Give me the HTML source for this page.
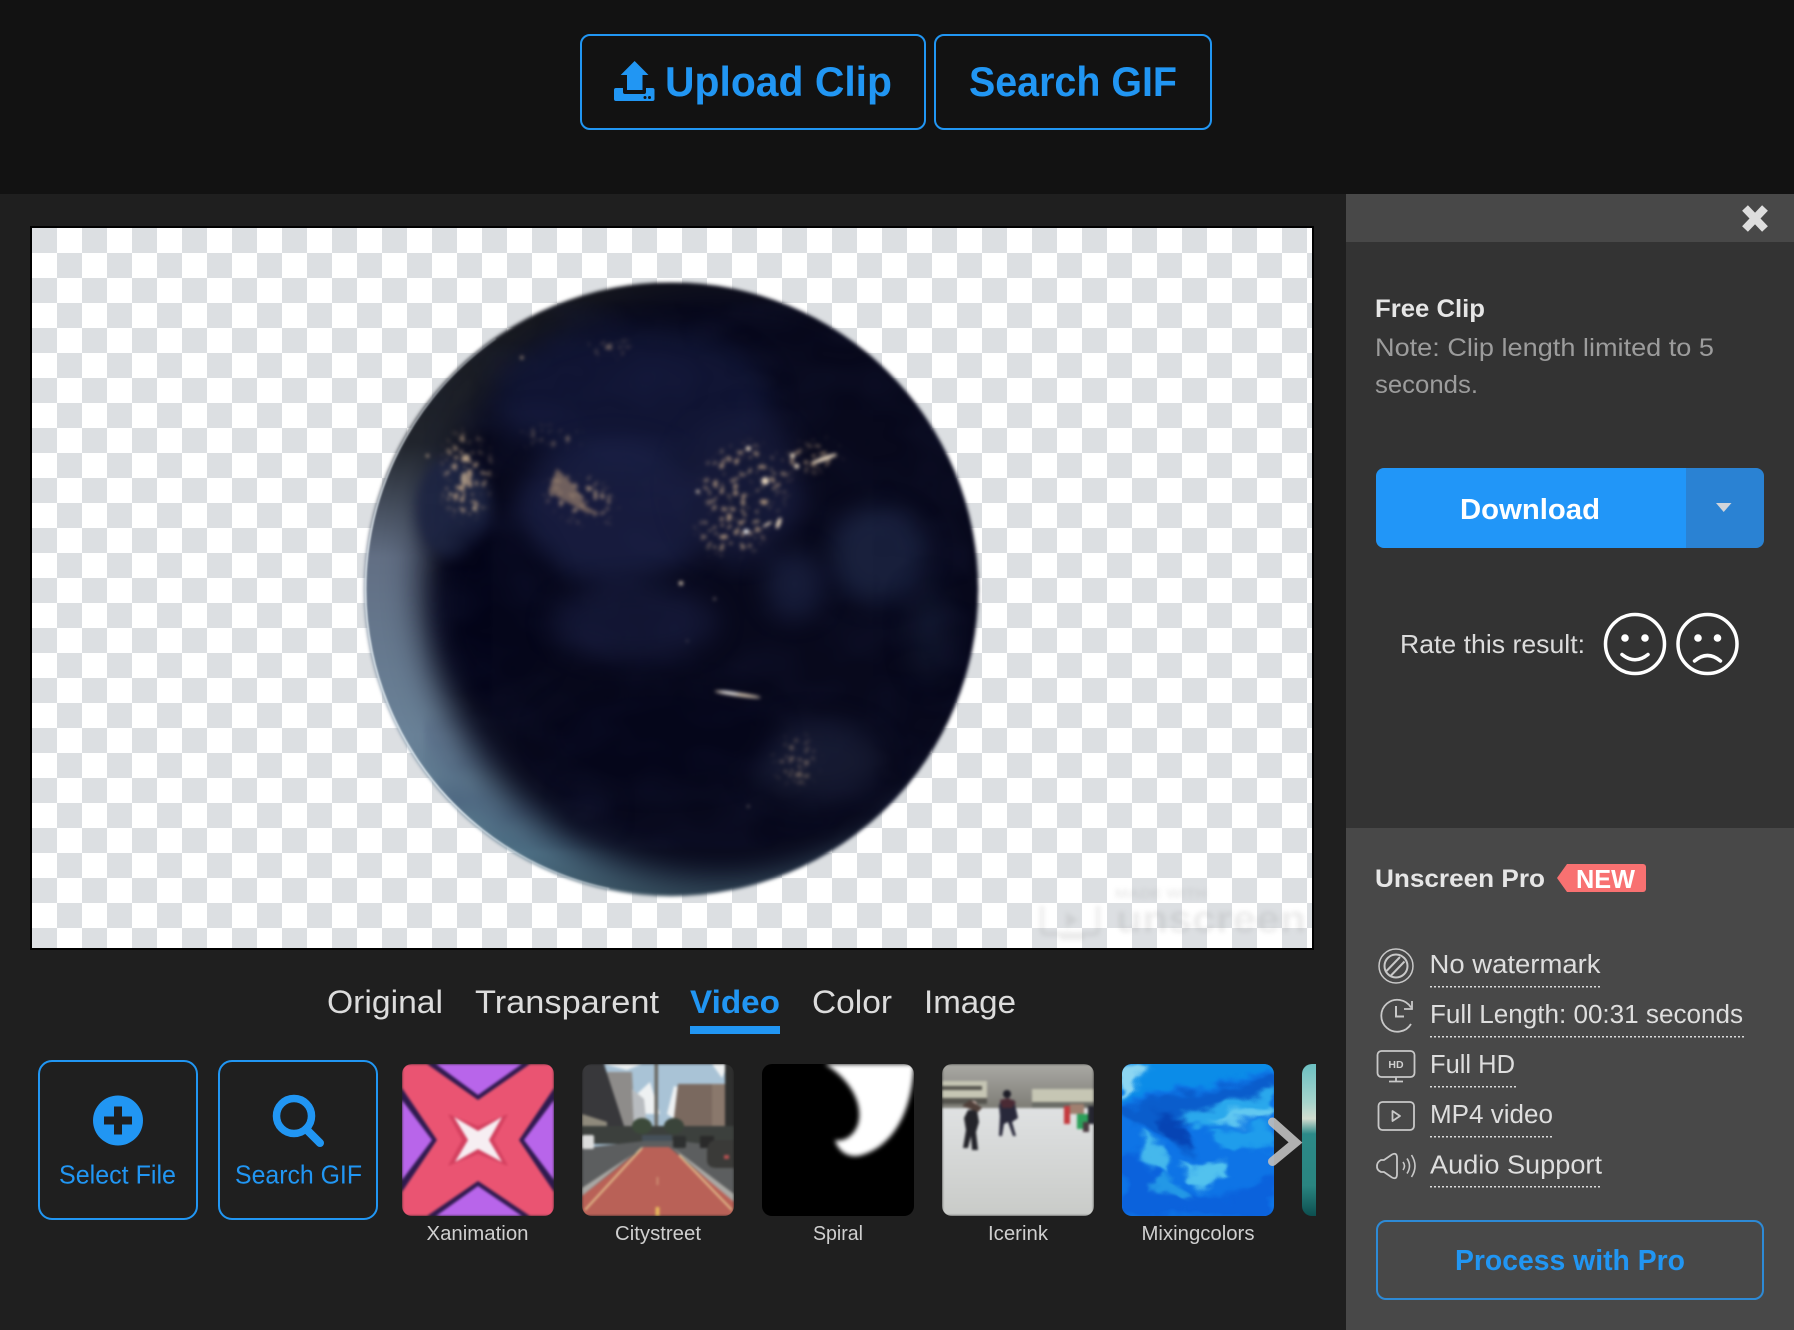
<!DOCTYPE html>
<html><head><meta charset="utf-8"><title>Unscreen</title>
<style>
html,body{margin:0;padding:0;background:#1f1f1f;width:1794px;height:1330px;overflow:hidden}
svg{display:block;font-family:"Liberation Sans",sans-serif}
filter{color-interpolation-filters:sRGB}
</style></head><body>
<svg xmlns="http://www.w3.org/2000/svg" width="1794" height="1330" viewBox="0 0 1794 1330">
<defs>
<pattern id="ck" x="32" y="228" width="50" height="50" patternUnits="userSpaceOnUse">
<rect width="50" height="50" fill="#fff"/><rect width="25" height="25" fill="#dcdfe2"/><rect x="25" y="25" width="25" height="25" fill="#dcdfe2"/>
</pattern>
<clipPath id="globe"><circle cx="787" cy="782" r="729"/></clipPath>
<linearGradient id="rim" x1="0" y1="0" x2="0" y2="1"><stop offset="0" stop-color="#14151b"/><stop offset=".28" stop-color="#22262e"/><stop offset=".45" stop-color="#626f84"/><stop offset=".72" stop-color="#6a8298"/><stop offset=".9" stop-color="#4f7186"/><stop offset="1" stop-color="#2f4450"/></linearGradient>
<linearGradient id="rimline" gradientUnits="userSpaceOnUse" x1="0" y1="187" x2="0" y2="1500"><stop offset="0" stop-color="#dfe8ee" stop-opacity=".25"/><stop offset=".35" stop-color="#dfe8ee" stop-opacity=".9"/><stop offset=".85" stop-color="#dfeaf0" stop-opacity=".95"/><stop offset="1" stop-color="#dfe8ee" stop-opacity=".4"/></linearGradient>
<filter id="b2" color-interpolation-filters="sRGB" x="-10%" y="-10%" width="120%" height="120%"><feGaussianBlur stdDeviation="4.500"/></filter>
<filter id="b40" color-interpolation-filters="sRGB" x="-20%" y="-20%" width="140%" height="140%"><feGaussianBlur stdDeviation="42"/></filter>
<filter id="b30" color-interpolation-filters="sRGB" x="-60%" y="-60%" width="220%" height="220%"><feGaussianBlur stdDeviation="30"/></filter>
<filter id="b15" color-interpolation-filters="sRGB" x="-60%" y="-60%" width="220%" height="220%"><feGaussianBlur stdDeviation="14"/></filter>
<filter id="l3" color-interpolation-filters="sRGB" x="-100%" y="-100%" width="300%" height="300%"><feGaussianBlur stdDeviation="2"/></filter>
<filter id="t1" color-interpolation-filters="sRGB" x="-5%" y="-5%" width="110%" height="110%"><feGaussianBlur stdDeviation="1.300"/></filter>
<filter id="t2" color-interpolation-filters="sRGB" x="-5%" y="-5%" width="110%" height="110%"><feGaussianBlur stdDeviation="2.500"/></filter>
<filter id="swirl" color-interpolation-filters="sRGB" x="-10%" y="-10%" width="120%" height="120%"><feGaussianBlur stdDeviation="2.500" result="g"/><feTurbulence type="fractalNoise" baseFrequency="0.03 0.045" numOctaves="3" seed="11" result="n"/><feDisplacementMap in="g" in2="n" scale="28" xChannelSelector="R" yChannelSelector="G"/></filter>
<filter id="clouds" color-interpolation-filters="sRGB" x="0" y="0" width="100%" height="100%"><feTurbulence type="fractalNoise" baseFrequency="0.006 0.012" numOctaves="3" seed="4"/><feColorMatrix values="0 0 0 0 .14  0 0 0 0 .17  0 0 0 0 .34  1.1 0 0 0 -.42"/><feGaussianBlur stdDeviation="10"/></filter>
<filter id="sparkle" color-interpolation-filters="sRGB" x="-30%" y="-30%" width="160%" height="160%"><feGaussianBlur in="SourceAlpha" stdDeviation="12" result="m"/><feTurbulence type="turbulence" baseFrequency="0.06" numOctaves="2" seed="9"/><feColorMatrix values="0 0 0 0 .80  0 0 0 0 .68  0 0 0 0 .55  8 0 0 0 -2.800"/><feComposite in2="m" operator="in"/><feGaussianBlur stdDeviation="2.400"/></filter>
<clipPath id="c1"><rect x="402" y="1064" width="152" height="152" rx="10"/></clipPath>
<clipPath id="c2"><rect x="582" y="1064" width="152" height="152" rx="10"/></clipPath>
<clipPath id="c3"><rect x="762" y="1064" width="152" height="152" rx="10"/></clipPath>
<clipPath id="c4"><rect x="942" y="1064" width="152" height="152" rx="10"/></clipPath>
<clipPath id="c5"><rect x="1122" y="1064" width="152" height="152" rx="10"/></clipPath>
<clipPath id="c6"><path d="M1316 1064h-4a10 10 0 0 0-10 10v132a10 10 0 0 0 10 10h4z"/></clipPath>
<linearGradient id="tree" x1="0" y1="0" x2="0" y2="1"><stop offset="0" stop-color="#a9a9a4"/><stop offset="1" stop-color="#77766f"/></linearGradient>
<linearGradient id="ice" x1="0" y1="0" x2="0" y2="1"><stop offset="0" stop-color="#dfe1e2"/><stop offset="1" stop-color="#c9cbc8"/></linearGradient>
<linearGradient id="sea" x1="0" y1="0" x2="0" y2="1"><stop offset="0" stop-color="#6cc0c2"/><stop offset=".25" stop-color="#a6d4cc"/><stop offset=".36" stop-color="#d2dccf"/><stop offset=".46" stop-color="#2c8a88"/><stop offset=".8" stop-color="#2a8580"/><stop offset="1" stop-color="#0d4f50"/></linearGradient>
</defs>

<!-- backgrounds -->
<rect width="1794" height="1330" fill="#1f1f1f"/>
<rect width="1794" height="194" fill="#121212"/>
<rect x="1346" y="194" width="448" height="48" fill="#484848"/>
<rect x="1346" y="242" width="448" height="586" fill="#333"/>
<rect x="1346" y="828" width="448" height="502" fill="#484848"/>

<!-- top buttons -->
<rect x="581" y="35" width="344" height="94" rx="9" fill="none" stroke="#2196f3" stroke-width="2"/>
<rect x="935" y="35" width="276" height="94" rx="9" fill="none" stroke="#2196f3" stroke-width="2"/>
<path fill="#2196f3" d="M634.6 61 648.5 75H642.5V90H627V75H620.7ZM614 90q0-2 2-2h7v4q0 2 2 2h19q2 0 2-2v-4h6.500q2 0 2 2v9q0 2-2 2H616q-2 0-2-2Z"/>
<circle cx="645" cy="97.500" r="1.500" fill="#121212"/><circle cx="649.500" cy="97.500" r="1.500" fill="#121212"/>
<text x="665" y="96" font-size="42" font-weight="700" fill="#2196f3" textLength="227" lengthAdjust="spacingAndGlyphs">Upload Clip</text>
<text x="969" y="96" font-size="42" font-weight="700" fill="#2196f3" textLength="208" lengthAdjust="spacingAndGlyphs">Search GIF</text>

<!-- preview -->
<rect x="30" y="226" width="1284" height="724" fill="#000"/>
<rect x="32" y="228" width="1280" height="720" fill="url(#ck)"/>

<!-- earth -->
<svg x="340" y="260" width="660" height="660" viewBox="0 0 1568 1568">
<g filter="url(#b2)"><g clip-path="url(#globe)">
<rect x="0" y="0" width="1568" height="1568" fill="url(#rim)"/>
<circle cx="905" cy="770" r="712" fill="#08091c" filter="url(#b40)"/>
<!-- dim land / cloud masses -->
<ellipse cx="700" cy="330" rx="330" ry="170" fill="#141a3c" opacity=".75" filter="url(#b30)"/>
<ellipse cx="650" cy="600" rx="230" ry="170" fill="#1c2248" opacity=".75" filter="url(#b30)"/>
<ellipse cx="950" cy="540" rx="150" ry="170" fill="#181c3c" opacity=".8" filter="url(#b30)"/>
<ellipse cx="270" cy="590" rx="90" ry="120" fill="#1f2644" opacity=".95" filter="url(#b15)"/>
<ellipse cx="380" cy="830" rx="130" ry="200" fill="#05061a" opacity=".95" filter="url(#b30)"/>
<ellipse cx="1280" cy="700" rx="115" ry="115" fill="#1b2340" opacity=".9" filter="url(#b30)"/>
<ellipse cx="1080" cy="770" rx="70" ry="80" fill="#181e3c" opacity=".9" filter="url(#b30)"/>
<ellipse cx="1400" cy="880" rx="50" ry="120" fill="#11162c" opacity=".9" filter="url(#b30)"/>
<ellipse cx="700" cy="860" rx="200" ry="90" fill="#161a3a" opacity=".75" filter="url(#b30)"/>
<ellipse cx="1130" cy="1190" rx="160" ry="95" fill="#151930" filter="url(#b30)"/>
<ellipse cx="590" cy="1300" rx="50" ry="45" fill="#11142c" filter="url(#b30)"/>
<ellipse cx="760" cy="1130" rx="280" ry="120" fill="#05061a" opacity=".85" filter="url(#b30)"/>
<rect x="200" y="100" width="1300" height="1300" filter="url(#clouds)" opacity=".3"/>
<!-- speckled city lights -->
<g filter="url(#sparkle)" opacity=".85">
<ellipse cx="300" cy="510" rx="55" ry="100"/>
<ellipse cx="570" cy="565" rx="90" ry="50" transform="rotate(25 570 565)"/>
<ellipse cx="960" cy="530" rx="100" ry="90"/>
<ellipse cx="1120" cy="470" rx="70" ry="30" transform="rotate(-15 1120 470)"/>
<ellipse cx="930" cy="640" rx="80" ry="60"/>
<ellipse cx="640" cy="210" rx="50" ry="12"/>
<ellipse cx="500" cy="420" rx="70" ry="14"/>
<ellipse cx="1085" cy="1190" rx="50" ry="55" opacity=".6"/>
</g>
<g filter="url(#l3)">
<g fill="#c8b092" opacity=".8">
<circle cx="300" cy="470" r="9"/><ellipse cx="295" cy="520" rx="8" ry="16"/><circle cx="262" cy="556" r="4"/><circle cx="320" cy="590" r="6"/><circle cx="208" cy="465" r="4"/><circle cx="432" cy="232" r="4"/>
</g>
<path d="M515 495 555 535 585 585 620 605 585 600 530 570 495 550Z" fill="#8e7768" opacity=".75" filter="url(#l3)"/>
<g fill="#e8d6be">
<circle cx="1010" cy="525" r="9"/><circle cx="970" cy="448" r="6"/><circle cx="1075" cy="465" r="6"/><circle cx="1085" cy="490" r="6"/><ellipse cx="1150" cy="472" rx="32" ry="5" transform="rotate(-20 1150 472)"/><ellipse cx="1042" cy="625" rx="5" ry="14" transform="rotate(20 1042 625)"/><ellipse cx="1015" cy="628" rx="12" ry="3" transform="rotate(-30 1015 628)"/><circle cx="850" cy="550" r="4"/>
<ellipse cx="945" cy="1032" rx="55" ry="4" transform="rotate(8 945 1032)"/><circle cx="810" cy="768" r="5"/><circle cx="890" cy="805" r="3" opacity=".6"/><circle cx="825" cy="905" r="2" opacity=".6"/><circle cx="970" cy="1298" r="2.500" opacity=".7"/>
</g>
<circle cx="965" cy="645" r="6" fill="#fff"/><ellipse cx="925" cy="1028" rx="24" ry="3" transform="rotate(8 925 1028)" fill="#fff"/>
</g>
</g></g>
<path d="M370 187A727 727 0 0 0 640 1494" fill="none" stroke="url(#rimline)" stroke-width="4" filter="url(#l3)"/>
</svg>

<!-- watermark -->
<g filter="url(#t2)" opacity=".14" fill="#777">
<text x="1115" y="898" font-size="13" font-weight="700" textLength="92" lengthAdjust="spacingAndGlyphs">MADE WITH</text>
<text x="1116" y="932" font-size="38" font-weight="700" textLength="190" lengthAdjust="spacingAndGlyphs">unscreen</text>
<path d="M1042 906v24q0 4 4 4h48q4 0 4-4v-24" fill="none" stroke="#777" stroke-width="4"/><path d="M1060 938h24" stroke="#777" stroke-width="4"/><path d="M1066 912l12 8-12 8z"/>
</g>

<!-- tabs -->
<g font-size="32" fill="#dcdcdc">
<text x="327" y="1013" textLength="116" lengthAdjust="spacingAndGlyphs">Original</text>
<text x="475" y="1013" textLength="184" lengthAdjust="spacingAndGlyphs">Transparent</text>
<text x="690" y="1013" font-weight="700" fill="#2196f3" textLength="90" lengthAdjust="spacingAndGlyphs">Video</text>
<text x="812" y="1013" textLength="80" lengthAdjust="spacingAndGlyphs">Color</text>
<text x="924" y="1013" textLength="92" lengthAdjust="spacingAndGlyphs">Image</text>
</g>
<rect x="690" y="1026" width="90" height="8" fill="#2196f3"/>

<!-- select buttons -->
<rect x="39" y="1061" width="158" height="158" rx="13" fill="none" stroke="#2196f3" stroke-width="2"/>
<rect x="219" y="1061" width="158" height="158" rx="13" fill="none" stroke="#2196f3" stroke-width="2"/>
<circle cx="118" cy="1120.500" r="25" fill="#2196f3"/>
<path d="M118 1106.500v28M104 1120.500h28" stroke="#1f1f1f" stroke-width="8"/>
<circle cx="294" cy="1116" r="17.500" fill="none" stroke="#2196f3" stroke-width="7.500"/>
<path d="M306 1129 320 1143" stroke="#2196f3" stroke-width="8" stroke-linecap="round"/>
<text x="59" y="1183.500" font-size="26" fill="#2196f3" textLength="117" lengthAdjust="spacingAndGlyphs">Select File</text>
<text x="235" y="1183.500" font-size="26" fill="#2196f3" textLength="127" lengthAdjust="spacingAndGlyphs">Search GIF</text>

<!-- thumb 1 Xanimation -->
<g clip-path="url(#c1)"><g transform="translate(402 1064)" filter="url(#t1)">
<rect width="152" height="152" fill="#ea5472"/>
<path d="M25 0H128L76 36ZM0 24 35 76 0 128ZM152 24 117 76 152 128ZM25 152H128L76 117Z" fill="#2f1a4f"/>
<path d="M34 0H120L76 31ZM0 36 30 76 0 116ZM152 36 122 76 152 116ZM34 152H120L76 122Z" fill="#b865ea"/>
<path d="M46 50 76 62 106 50 92 76 106 102 76 90 46 102 60 76Z" fill="#d4405f"/>
<path d="M52 53 76 67 100 53 87 76 100 98 76 85 53 98 66 76Z" fill="#f6eef2"/>
</g></g>

<!-- thumb 2 Citystreet -->
<g clip-path="url(#c2)"><g transform="translate(582 1064)" filter="url(#t1)">
<rect width="152" height="90" fill="#a9c3d6"/>
<path d="M22 0H60L45 6ZM55 30 68 18 78 50 60 50ZM85 50 92 22 112 28 100 60ZM130 0H146L140 14Z" fill="#eef1f2"/>
<path d="M25 8 50 8 53 65 35 65Z" fill="#8e8c8a"/><path d="M50 25 62 35 65 65 52 65Z" fill="#b8bcc0"/>
<path d="M0 0H22L42 62 0 62Z" fill="#38383b"/><path d="M0 50 25 58 25 70 0 66Z" fill="#8f8a7c"/>
<path d="M96 20H130V70H90Z" fill="#7a695f"/><path d="M130 20H145V70H130Z" fill="#8a786c"/><rect x="143" width="9" height="75" fill="#2e2f2e"/>
<rect x="72.500" width="3.500" height="80" fill="#6a6862"/>
<path d="M0 62H152V80H0Z" fill="#3c403d"/><ellipse cx="60" cy="62" rx="10" ry="8" fill="#3c4a3a"/><ellipse cx="92" cy="62" rx="10" ry="8" fill="#3a443a"/>
<path d="M0 84 72 76H90L152 84V152H0Z" fill="#5c5e5f"/>
<rect x="0" y="71" width="12" height="14" rx="2" fill="#dcdcdc"/><rect x="91" y="72" width="13" height="12" rx="2" fill="#2e3030"/><rect x="118" y="72" width="14" height="12" fill="#2a2a2a"/><path d="M125 88q0-12 10-12h17v28h-17q-10 0-10-8Z" fill="#3a3a38"/><rect x="142" y="91" width="5" height="4" fill="#b05050"/><rect x="60" y="71" width="30" height="6" fill="#455059"/>
<path d="M0 124 62 83 90 83 152 130V140L90 83 60 83 0 132Z" fill="#a9a8a4"/>
<path d="M0 132 62 83H87L152 138V152H0Z" fill="#b96157"/>
<path d="M3 146 60 84M150 146 97 91" stroke="#e4c28e" stroke-width="1.800" fill="none"/>
<rect x="73.500" y="143" width="4" height="9" fill="#e5b65c"/><rect x="74.500" y="113" width="2" height="8" fill="#cc8a70"/>
</g></g>

<!-- thumb 3 Spiral -->
<g clip-path="url(#c3)"><rect x="762" y="1064" width="152" height="152" fill="#000"/>
<path transform="translate(762 1064)" filter="url(#t2)" fill="#fff" d="M63 0C86 14 102 38 96 60C92 72 82 78 73 76C76 88 88 95 100 91C130 82 150 50 152 0Z"/>
</g>

<!-- thumb 4 Icerink -->
<g clip-path="url(#c4)"><g transform="translate(942 1064)" filter="url(#t1)">
<rect width="152" height="50" fill="url(#tree)"/>
<path d="M0 17H45V34H0ZM90 25H152V45H90Z" fill="#c6c6b4"/><path d="M0 22H40V26H0ZM0 34H45V40H0Z" fill="#55544e"/><rect x="90" y="38" width="62" height="6" fill="#6a6c66"/>
<rect y="44" width="152" height="108" fill="url(#ice)"/>
<path d="M26 46h9l2 12-3 10 2 18h-6l-1-14-3 12h-5l3-18-2-12z" fill="#24242a"/><circle cx="31" cy="41" r="4" fill="#e4c8c0"/><path d="M20 42 28 36 40 44 36 48Z" fill="#50403a"/>
<circle cx="65" cy="30" r="4" fill="#1c1c26"/><path d="M59 36h13l4 18-6 4 4 14h-3l-5-14-4 2-2 12h-3l1-20-1-10z" fill="#28283a"/><path d="M58 36 66 34 74 38 70 44 60 44Z" fill="#4a2a34"/>
<rect x="122" y="42" width="6" height="18" fill="#c43b3f"/><rect x="135" y="50" width="11" height="15" fill="#2ca05a"/><rect x="146" y="42" width="6" height="18" fill="#252530"/><rect x="128" y="40" width="14" height="10" fill="#a08070"/><rect x="141" y="58" width="6" height="10" fill="#4a3a40"/>
</g></g>

<!-- thumb 5 Mixingcolors -->
<g clip-path="url(#c5)"><g transform="translate(1122 1064)">
<rect width="152" height="152" fill="#0e74e6"/>
<g filter="url(#swirl)">
<path d="M-10 -10H160V10L100 16 50 26 0 36Z" fill="#0b8ce8"/>
<path d="M0 0H25L18 22 0 32Z" fill="#8cd6f2"/>
<path d="M-10 42 40 34 90 22 160 14 160 34 100 44 60 66 70 95 40 75 10 62Z" fill="#0a5dcc"/>
<path d="M60 50 100 38 152 28 152 50 110 60 70 62Z" fill="#2aa8ec"/>
<path d="M85 56 125 46 152 46 150 58 110 60Z" fill="#62c8f0"/>
<path d="M15 70 40 85 50 115 30 100Z" fill="#45b8ec"/><path d="M58 105 100 98 108 112 80 122Z" fill="#52c2ee"/>
<path d="M30 46 62 56 68 84 48 78Z" fill="#0644b4"/>
<path d="M85 66 152 62 152 82 110 86Z" fill="#1f9dec"/>
<path d="M0 92 20 88 50 128 70 125 110 135 152 112 152 152 0 152Z" fill="#0b62dc"/>
<path d="M40 112 70 130 60 140 30 125Z" fill="#2398e6"/>
</g>
</g></g>

<!-- thumb 6 -->
<g clip-path="url(#c6)"><rect x="1302" y="1064" width="14" height="152" fill="url(#sea)"/></g>

<!-- chevron -->
<path d="M1272.500 1122 1295.500 1142.500 1272.500 1161.500" fill="none" stroke="#bdbdbd" stroke-opacity=".92" stroke-width="9" stroke-linecap="round" stroke-linejoin="miter"/>

<!-- labels -->
<g font-size="20" fill="#cfcfcf">
<text x="426.500" y="1240" textLength="102" lengthAdjust="spacingAndGlyphs">Xanimation</text>
<text x="615" y="1240" textLength="86" lengthAdjust="spacingAndGlyphs">Citystreet</text>
<text x="813" y="1240" textLength="50" lengthAdjust="spacingAndGlyphs">Spiral</text>
<text x="988" y="1240" textLength="60" lengthAdjust="spacingAndGlyphs">Icerink</text>
<text x="1141.500" y="1240" textLength="113" lengthAdjust="spacingAndGlyphs">Mixingcolors</text>
</g>

<!-- panel top -->
<path d="M1745 208 1765 229M1765 208 1745 229" stroke="#dedede" stroke-width="8"/>
<text x="1375" y="317" font-size="25" font-weight="700" fill="#e6e6e6" textLength="110" lengthAdjust="spacingAndGlyphs">Free Clip</text>
<text x="1375" y="356" font-size="25" fill="#9c9c9c" textLength="339" lengthAdjust="spacingAndGlyphs">Note: Clip length limited to 5</text>
<text x="1375" y="393" font-size="25" fill="#9c9c9c" textLength="103" lengthAdjust="spacingAndGlyphs">seconds.</text>
<path d="M1686 468H1756a8 8 0 0 1 8 8v64a8 8 0 0 1-8 8H1686Z" fill="#2a82d3"/>
<path d="M1686 468H1384a8 8 0 0 0-8 8v64a8 8 0 0 0 8 8H1686Z" fill="#2196f8"/>
<text x="1460" y="519" font-size="29" font-weight="700" fill="#fff" textLength="140" lengthAdjust="spacingAndGlyphs">Download</text>
<path d="M1716 503H1731.500L1723.700 512Z" fill="#d0d4da"/>
<text x="1400" y="653" font-size="26" fill="#dcdcdc" textLength="185" lengthAdjust="spacingAndGlyphs">Rate this result:</text>
<g fill="none" stroke="#fff" stroke-width="3.500" stroke-linecap="round">
<circle cx="1635" cy="644" r="29.500"/><circle cx="1707.500" cy="644" r="29.500"/>
<path d="M1622 654.500Q1635 665 1648 654.500"/><path d="M1694.500 661Q1707.500 650 1720.500 661"/>
</g>
<g fill="#fff"><circle cx="1625" cy="638" r="3.800"/><circle cx="1645" cy="638" r="3.800"/><circle cx="1698" cy="638" r="3.800"/><circle cx="1717.500" cy="638" r="3.800"/></g>

<!-- panel bottom -->
<text x="1375" y="887" font-size="25" font-weight="700" fill="#e6e6e6" textLength="170" lengthAdjust="spacingAndGlyphs">Unscreen Pro</text>
<path d="M1557 878 1567 864H1643a3 3 0 0 1 3 3v22a3 3 0 0 1-3 3H1567Z" fill="#f87171"/>
<text x="1576" y="888" font-size="26" font-weight="700" fill="#fff" textLength="59" lengthAdjust="spacingAndGlyphs">NEW</text>

<g font-size="25.500" fill="#dedede">
<text x="1429.500" y="973" textLength="171" lengthAdjust="spacingAndGlyphs">No watermark</text>
<text x="1430" y="1023" textLength="313" lengthAdjust="spacingAndGlyphs">Full Length: 00:31 seconds</text>
<text x="1430" y="1073" textLength="85" lengthAdjust="spacingAndGlyphs">Full HD</text>
<text x="1430" y="1123" textLength="123" lengthAdjust="spacingAndGlyphs">MP4 video</text>
<text x="1430" y="1173.500" textLength="172" lengthAdjust="spacingAndGlyphs">Audio Support</text>
</g>
<g stroke="#dcdcdc" stroke-width="1.500" stroke-dasharray="2 2">
<path d="M1430 986.700H1602M1430 1036.700H1744M1430 1086.700H1516M1430 1136.700H1554M1430 1186.700H1602"/>
</g>

<g fill="none" stroke="#c8c8c8" stroke-width="1.500">
<circle cx="1396" cy="966" r="17"/><circle cx="1396" cy="966" r="11.500" stroke-width="2"/>
<path d="M1386.500 971 1400 957M1391 975.500 1404.500 961.500" stroke-width="2"/>
<path d="M1411 1007.500A16 16 0 1 0 1411 1024" stroke-width="1.800"/><path d="M1412 1001V1009H1404" stroke-width="1.800"/>
<path d="M1396 1006V1016.500H1404" stroke-width="2"/>
<rect x="1377.500" y="1051" width="37" height="26" rx="4" stroke-width="1.800"/><path d="M1396 1077V1081M1389 1081.500H1403" stroke-width="1.800"/>
<rect x="1378.500" y="1102" width="35.500" height="28" rx="4" stroke-width="1.800"/><path d="M1392.500 1111 1400 1116 1392.500 1121Z" stroke-width="1.800" stroke-linejoin="round"/>
<path d="M1392 1154.500Q1397 1152 1397 1158V1174Q1397 1180 1392 1177.500L1384 1172H1381Q1376.500 1170 1377 1166 1377 1162 1381 1160H1384Z" stroke-width="1.800"/>
<path d="M1403 1162Q1406 1166 1403 1170M1407 1158.500Q1412 1166 1407 1173.500M1411.500 1155Q1418.500 1166 1411.500 1177" stroke-width="1.600"/>
</g>
<text x="1396" y="1068" font-size="10.500" font-weight="700" fill="#d0d0d0" text-anchor="middle">HD</text>

<rect x="1377" y="1221" width="386" height="78" rx="9" fill="none" stroke="#2d8ad6" stroke-width="2"/>
<text x="1455" y="1270" font-size="29" font-weight="700" fill="#2196f3" textLength="230" lengthAdjust="spacingAndGlyphs">Process with Pro</text>
</svg>
</body></html>
